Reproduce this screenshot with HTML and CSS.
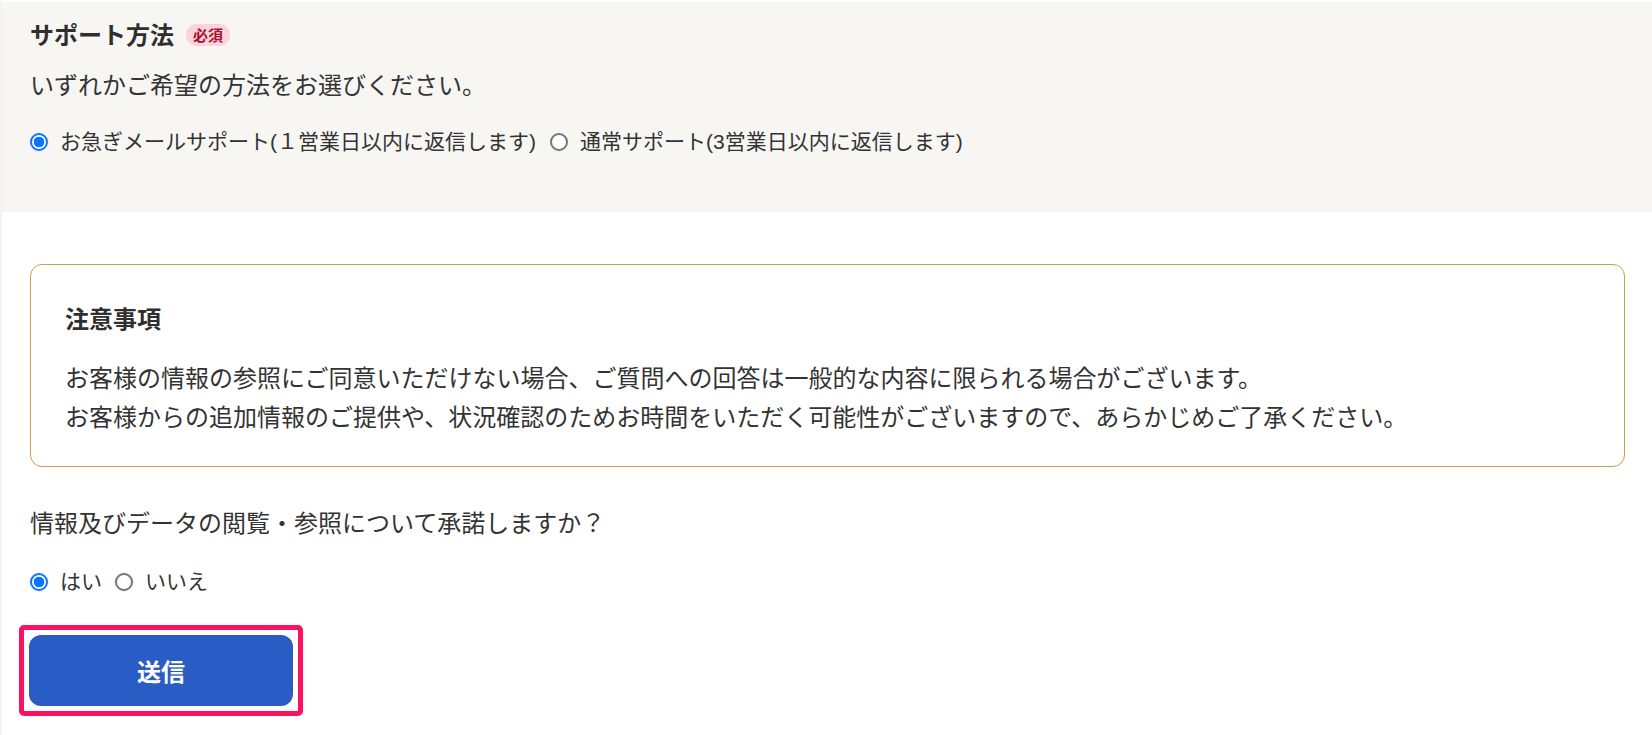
FILE: index.html
```html
<!DOCTYPE html>
<html lang="ja">
<head>
<meta charset="utf-8">
<title>サポート方法</title>
<link rel="stylesheet" href="styles.css">
</head>
<body>
<div class="page">
  <section class="panel">
    <div class="title-row">
      <h2 class="title">サポート方法</h2>
      <span class="badge">必須</span>
    </div>
    <p class="lead">いずれかご希望の方法をお選びください。</p>
    <div class="radios">
      <label class="radio"><input type="radio" name="support" checked><span>お急ぎメールサポート(１営業日以内に返信します)</span></label>
      <label class="radio"><input type="radio" name="support"><span>通常サポート(3営業日以内に返信します)</span></label>
    </div>
  </section>

  <section class="notice">
    <h3 class="notice-title">注意事項</h3>
    <p class="notice-text">お客様の情報の参照にご同意いただけない場合、ご質問への回答は一般的な内容に限られる場合がございます。<br>お客様からの追加情報のご提供や、状況確認のためお時間をいただく可能性がございますので、あらかじめご了承ください。</p>
  </section>

  <p class="question">情報及びデータの閲覧・参照について承諾しますか？</p>
  <div class="radios radios-consent">
    <label class="radio"><input type="radio" name="consent" checked><span>はい</span></label>
    <label class="radio"><input type="radio" name="consent"><span>いいえ</span></label>
  </div>

  <div class="submit-frame">
    <button class="submit" type="button">送信</button>
  </div>
</div>
</body>
</html>
```

FILE: styles.css
```css
html, body {
  margin: 0;
  padding: 0;
  background: #ffffff;
}

body {
  font-family: "Noto Sans CJK JP", "Noto Sans", sans-serif;
  color: #333333;
}

.page {
  border-left: 2px solid #f3f3f3;
  min-height: 735px;
  box-sizing: border-box;
  padding-top: 2px;
}

.panel {
  background: #f7f6f3;
  padding: 15px 28px 55px 28px;
}

.title-row {
  display: flex;
  align-items: center;
  gap: 12px;
}

.title {
  margin: 0;
  font-size: 24px;
  line-height: 34px;
  font-weight: 700;
  color: #2f2f2f;
}

.badge {
  display: inline-block;
  background: #fbd3dc;
  color: #a8102c;
  font-size: 15px;
  font-weight: 700;
  line-height: 22px;
  padding: 0 7px;
  border-radius: 11px;
  margin-top: 2px;
}

.lead {
  margin: 15px 0 0 0;
  font-size: 24px;
  line-height: 36px;
}

.radios {
  display: flex;
  align-items: center;
  gap: 14px;
  margin-top: 24px;
  font-family: "Liberation Sans", "Noto Sans CJK JP", sans-serif;
  font-size: 21px;
  line-height: 31px;
  color: #333333;
}

.radio {
  display: flex;
  align-items: center;
  gap: 12px;
}

.radio input {
  appearance: none;
  -webkit-appearance: none;
  box-sizing: border-box;
  width: 18px;
  height: 18px;
  margin: 0;
  border: 2px solid #767676;
  border-radius: 50%;
  background: #ffffff;
  box-shadow: 0 0 0 1px #efefef;
}

.radio input:checked {
  border: 2px solid #0a75ff;
  background: radial-gradient(circle, #0a75ff 0, #0a75ff 5px, #ffffff 5.6px);
}

.notice {
  margin: 52px 27px 0 28px;
  border: 1px solid #c9a04c;
  border-radius: 12px;
  padding: 35px 34px 31px 34px;
}

.notice-title {
  margin: 0;
  font-size: 24px;
  line-height: 36px;
  font-weight: 700;
  color: #2f2f2f;
}

.notice-text {
  margin: 21px 0 0 0;
  font-size: 24px;
  line-height: 39px;
}

.question {
  margin: 37px 0 0 28px;
  font-size: 24px;
  line-height: 36px;
}

.radios-consent {
  margin: 26px 0 0 28px;
  gap: 13px;
}

.submit-frame {
  display: inline-block;
  margin: 28px 0 0 17px;
  border: 5px solid #fd1160;
  border-radius: 5px;
  padding: 5px;
}

.submit {
  display: block;
  width: 264px;
  height: 71px;
  border: none;
  border-radius: 12px;
  background: #2a5cc6;
  color: #ffffff;
  font-family: "Noto Sans CJK JP", sans-serif;
  font-size: 24px;
  font-weight: 700;
  cursor: pointer;
}
```
